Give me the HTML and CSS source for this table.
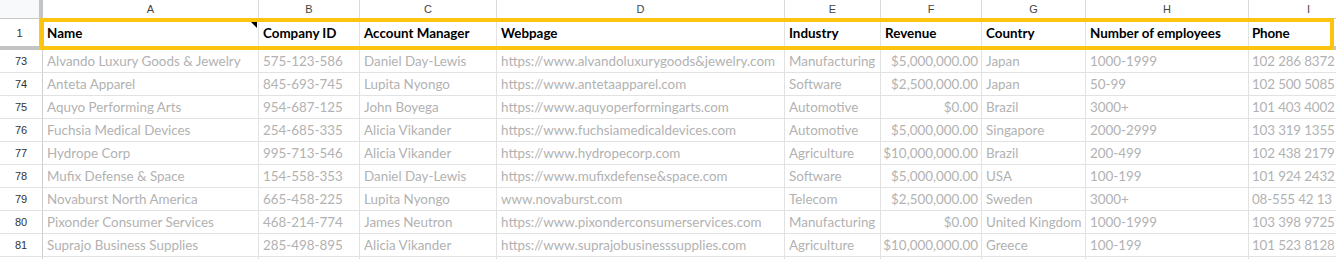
FILE: index.html
```html
<!DOCTYPE html>
<html>
<head>
<meta charset="utf-8">
<link rel="stylesheet" href="styles.css">
</head>
<body>
<div class="sheet">
  <div class="row colhead">
    <div class="corner"></div>
    <div class="ch">A</div><div class="ch">B</div><div class="ch">C</div><div class="ch">D</div><div class="ch">E</div><div class="ch">F</div><div class="ch">G</div><div class="ch">H</div><div class="ch">I</div>
  </div>
  <div class="row frozen">
    <div class="rh rh-frozen">1</div>
    <div class="c hd has-note">Name<span class="note"></span></div>
    <div class="c hd">Company ID</div>
    <div class="c hd">Account Manager</div>
    <div class="c hd">Webpage</div>
    <div class="c hd">Industry</div>
    <div class="c hd">Revenue</div>
    <div class="c hd">Country</div>
    <div class="c hd">Number of employees</div>
    <div class="c hd ph">Phone</div>
  </div>
  <div class="row data"><div class="rh">73</div><div class="c">Alvando Luxury Goods &amp; Jewelry</div><div class="c">575-123-586</div><div class="c">Daniel Day-Lewis</div><div class="c">https://www.alvandoluxurygoods&amp;jewelry.com</div><div class="c">Manufacturing</div><div class="c num">$5,000,000.00</div><div class="c">Japan</div><div class="c">1000-1999</div><div class="c ph">102 286 8372</div></div>
  <div class="row data"><div class="rh">74</div><div class="c">Anteta Apparel</div><div class="c">845-693-745</div><div class="c">Lupita Nyongo</div><div class="c">https://www.antetaapparel.com</div><div class="c">Software</div><div class="c num">$2,500,000.00</div><div class="c">Japan</div><div class="c">50-99</div><div class="c ph">102 500 5085</div></div>
  <div class="row data"><div class="rh">75</div><div class="c">Aquyo Performing Arts</div><div class="c">954-687-125</div><div class="c">John Boyega</div><div class="c">https://www.aquyoperformingarts.com</div><div class="c">Automotive</div><div class="c num">$0.00</div><div class="c">Brazil</div><div class="c">3000+</div><div class="c ph">101 403 4002</div></div>
  <div class="row data"><div class="rh">76</div><div class="c">Fuchsia Medical Devices</div><div class="c">254-685-335</div><div class="c">Alicia Vikander</div><div class="c">https://www.fuchsiamedicaldevices.com</div><div class="c">Automotive</div><div class="c num">$5,000,000.00</div><div class="c">Singapore</div><div class="c">2000-2999</div><div class="c ph">103 319 1355</div></div>
  <div class="row data"><div class="rh">77</div><div class="c">Hydrope Corp</div><div class="c">995-713-546</div><div class="c">Alicia Vikander</div><div class="c">https://www.hydropecorp.com</div><div class="c">Agriculture</div><div class="c num">$10,000,000.00</div><div class="c">Brazil</div><div class="c">200-499</div><div class="c ph">102 438 2179</div></div>
  <div class="row data"><div class="rh">78</div><div class="c">Mufix Defense &amp; Space</div><div class="c">154-558-353</div><div class="c">Daniel Day-Lewis</div><div class="c">https://www.mufixdefense&amp;space.com</div><div class="c">Software</div><div class="c num">$5,000,000.00</div><div class="c">USA</div><div class="c">100-199</div><div class="c ph">101 924 2432</div></div>
  <div class="row data"><div class="rh">79</div><div class="c">Novaburst North America</div><div class="c">665-458-225</div><div class="c">Lupita Nyongo</div><div class="c">www.novaburst.com</div><div class="c">Telecom</div><div class="c num">$2,500,000.00</div><div class="c">Sweden</div><div class="c">3000+</div><div class="c ph">08-555 42 13</div></div>
  <div class="row data"><div class="rh">80</div><div class="c">Pixonder Consumer Services</div><div class="c">468-214-774</div><div class="c">James Neutron</div><div class="c">https://www.pixonderconsumerservices.com</div><div class="c">Manufacturing</div><div class="c num">$0.00</div><div class="c">United Kingdom</div><div class="c">1000-1999</div><div class="c ph">103 398 9725</div></div>
  <div class="row data"><div class="rh">81</div><div class="c">Suprajo Business Supplies</div><div class="c">285-498-895</div><div class="c">Alicia Vikander</div><div class="c">https://www.suprajobusinesssupplies.com</div><div class="c">Agriculture</div><div class="c num">$10,000,000.00</div><div class="c">Greece</div><div class="c">100-199</div><div class="c ph">101 523 8128</div></div>
  <div class="row data last"><div class="rh"></div><div class="c"></div><div class="c"></div><div class="c"></div><div class="c"></div><div class="c"></div><div class="c"></div><div class="c"></div><div class="c"></div><div class="c"></div></div>
  <div class="selection"></div>
</div>
</body>
</html>
```
FILE: styles.css
```css
html, body {
  margin: 0;
  padding: 0;
  background: #fff;
}
body {
  width: 1336px;
  height: 259px;
  overflow: hidden;
}
.sheet {
  position: relative;
  width: 1336px;
  height: 259px;
  overflow: hidden;
}
.row {
  display: grid;
  grid-template-columns: 43px 216px 101px 137px 288px 96px 101px 104px 163px 120px;
}
.row > div {
  box-sizing: border-box;
  border-right: 1px solid #e2e2e2;
  border-bottom: 1px solid #e2e2e2;
  white-space: nowrap;
  overflow: hidden;
  display: flex;
  align-items: center;
}
.colhead {
  height: 19px;
}
.colhead > div {
  border-right-color: #dadada;
  border-bottom-color: #c8c8c8;
}
.corner {
  background: #f8f9fa;
  border-right: 4px solid #c4c4c4 !important;
}
.ch {
  justify-content: center;
  font-family: "Liberation Sans", Arial, sans-serif;
  font-size: 11px;
  color: #444;
}
.frozen {
  height: 31px;
}
.frozen > div {
  border-bottom: 4px solid #c4c4c4;
}
.rh {
  justify-content: center;
  font-family: "Liberation Sans", Arial, sans-serif;
  font-size: 11px;
  color: #333;
  background: #fff;
  border-right-color: #cfcfcf !important;
  border-bottom-color: #dcdcdc;
}
.rh-frozen {
  border-right: 4px solid #c4c4c4 !important;
  border-bottom-color: #c4c4c4 !important;
}
.data {
  height: 23px;
}
.c {
  padding: 0 3px 0 4px;
  font-family: Lato, "Open Sans", sans-serif;
  font-size: 13.4px;
  color: #b2b2b2;
}
.hd {
  color: #000;
  font-weight: 700;
}
.num {
  justify-content: flex-end;
  padding-left: 0;
}
.ph {
  padding-left: 3px;
  letter-spacing: -0.15px;
}
.has-note {
  position: relative;
}
.note {
  position: absolute;
  top: 3px;
  right: 1px;
  width: 0;
  height: 0;
  border-top: 6px solid #000;
  border-left: 6px solid transparent;
}
.selection {
  position: absolute;
  left: 40px;
  top: 18px;
  width: 1294px;
  height: 32px;
  box-sizing: border-box;
  border: 4px solid #fdc40f;
  pointer-events: none;
}
```
